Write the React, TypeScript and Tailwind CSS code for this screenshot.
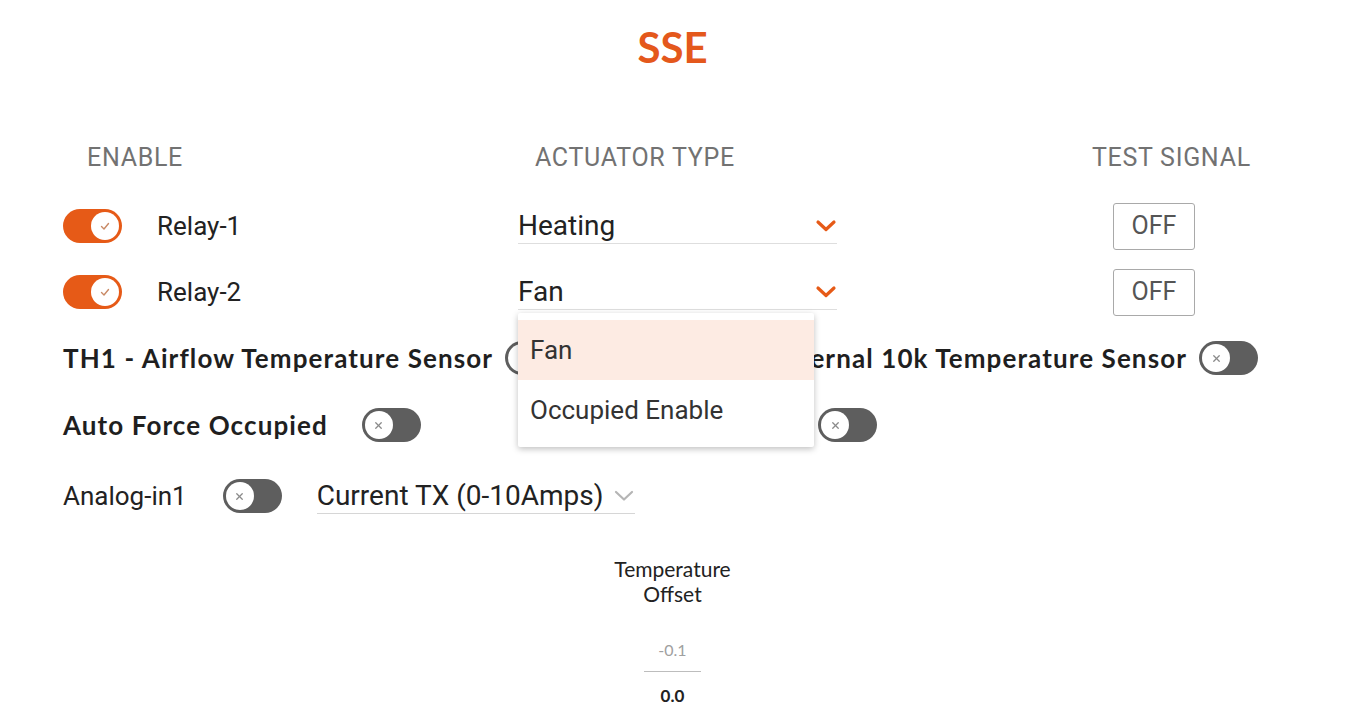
import clsx from 'clsx'

const roboto = 'font-[Roboto,"Liberation_Sans",sans-serif]'
const lato = 'font-[Lato,"Liberation_Sans",sans-serif]'

function Toggle({ on }: { on?: boolean }) {
  return (
    <div className={clsx('relative h-[34px] w-[59px] shrink-0 rounded-full', on ? 'bg-[#e65a17]' : 'bg-[#5e5e5e]')}>
      <div
        className={clsx(
          'absolute top-[3px] flex h-[28px] w-[28px] items-center justify-center rounded-full bg-white',
          on ? 'right-[3px]' : 'left-[3px]'
        )}
      >
        {on ? (
          <svg width="12" height="12" viewBox="0 0 12 12" fill="none" stroke="#c98a66" strokeWidth="1.4" strokeLinecap="round" strokeLinejoin="round">
            <polyline points="2.5,6.5 5,9 9.5,3.5" />
          </svg>
        ) : (
          <svg width="11" height="11" viewBox="0 0 12 12" fill="none" stroke="#8a8a8a" strokeWidth="1.4" strokeLinecap="round">
            <line x1="3" y1="3" x2="9" y2="9" />
            <line x1="9" y1="3" x2="3" y2="9" />
          </svg>
        )}
      </div>
    </div>
  )
}

function Chevron({ active }: { active?: boolean }) {
  return (
    <svg width="22" height="14" viewBox="0 0 22 14" fill="none"
      stroke={active ? '#e65a17' : '#b5b5b5'} strokeWidth={active ? 3.2 : 2.2} strokeLinecap="round" strokeLinejoin="round">
      <polyline points="3,3 11,10.5 19,3" />
    </svg>
  )
}

function Select({ value, width, active = true, size }: { value: string; width: string; active?: boolean; size: string }) {
  return (
    <div className={clsx('flex h-[36px] items-center justify-between border-b', width, active ? 'border-[#dedede]' : 'border-[#d6d6d6]')}>
      <span className={clsx(size, 'text-[#222]')}>{value}</span>
      <Chevron active={active} />
    </div>
  )
}

function OffButton() {
  return (
    <button className="ml-[276px] flex h-[47px] w-[82px] items-center justify-center rounded-[3px] border border-[#a9a9a9] bg-white text-[25px] text-[#555]">
      OFF
    </button>
  )
}

export default function App() {
  return (
    <div className={clsx('relative h-[721px] w-[1345px] overflow-hidden bg-white', roboto)}>
      <div className="flex h-[94px] items-center justify-center">
        <h1 className={clsx(lato, 'text-[42px] font-bold text-[#e4581c]')}>SSE</h1>
      </div>

      <div className="mt-[48px] flex h-[32px] items-center pl-[87px] text-[25px] tracking-[0.7px] text-[#727272]">
        <span className="w-[448px]">ENABLE</span>
        <span className="w-[557px]">ACTUATOR TYPE</span>
        <span>TEST SIGNAL</span>
      </div>

      <div className="mt-[28px] flex h-[48px] items-center pl-[63px]">
        <div className="flex w-[455px] items-center">
          <Toggle on />
          <span className="ml-[35px] text-[26px] text-[#222]">Relay-1</span>
        </div>
        <Select value="Heating" width="w-[319px]" size="text-[28px]" />
        <OffButton />
      </div>

      <div className="mt-[18px] flex h-[48px] items-center pl-[63px]">
        <div className="flex w-[455px] items-center">
          <Toggle on />
          <span className="ml-[35px] text-[26px] text-[#222]">Relay-2</span>
        </div>
        <Select value="Fan" width="w-[319px]" size="text-[28px]" />
        <OffButton />
      </div>

      <div className={clsx(lato, 'mt-[22px] flex h-[40px] items-center pl-[63px] pr-[87px] text-[26px] font-bold tracking-[1.1px] text-[#1f1f1f]')}>
        <span>TH1 - Airflow Temperature Sensor</span>
        <div className="ml-[12px]"><Toggle /></div>
        <span className="ml-auto">TH2 - External 10k Temperature Sensor</span>
        <div className="ml-[12px]"><Toggle /></div>
      </div>

      <div className={clsx(lato, 'mt-[27px] flex h-[40px] items-center pl-[63px] text-[26px] font-bold tracking-[1.1px] text-[#1f1f1f]')}>
        <div className="flex w-[755px] items-center">
          <span>Auto Force Occupied</span>
          <div className="ml-[34px]"><Toggle /></div>
        </div>
        <Toggle />
      </div>

      <div className="mt-[31px] flex h-[40px] items-center pl-[63px]">
        <span className="text-[26px] text-[#222]">Analog-in1</span>
        <div className="ml-[36px]"><Toggle /></div>
        <div className="ml-[35px]">
          <Select value="Current TX (0-10Amps)" width="w-[318px]" active={false} size="text-[28px]" />
        </div>
      </div>

      <div className={clsx(lato, 'mt-[40px] flex flex-col items-center text-[21px] leading-[25px] text-[#222]')}>
        <span>Temperature</span>
        <span>Offset</span>
        <span className="mt-[32px] text-[16px] leading-[24px] text-[#a0a0a0]">-0.1</span>
        <div className="mt-[9px] h-px w-[57px] bg-[#bdbdbd]" />
        <span className="mt-[12px] text-[17px] font-bold leading-[24px]">0.0</span>
      </div>

      <div className="absolute left-[518px] top-[313px] z-10 w-[296px] rounded-[2px] bg-white py-[7px] shadow-[0_2px_6px_rgba(0,0,0,0.25)]">
        <div className="flex h-[60px] items-center bg-[#fdebe3] px-[12px] text-[26px] text-[#333]">Fan</div>
        <div className="flex h-[60px] items-center px-[12px] text-[26px] text-[#333]">Occupied Enable</div>
      </div>
    </div>
  )
}
